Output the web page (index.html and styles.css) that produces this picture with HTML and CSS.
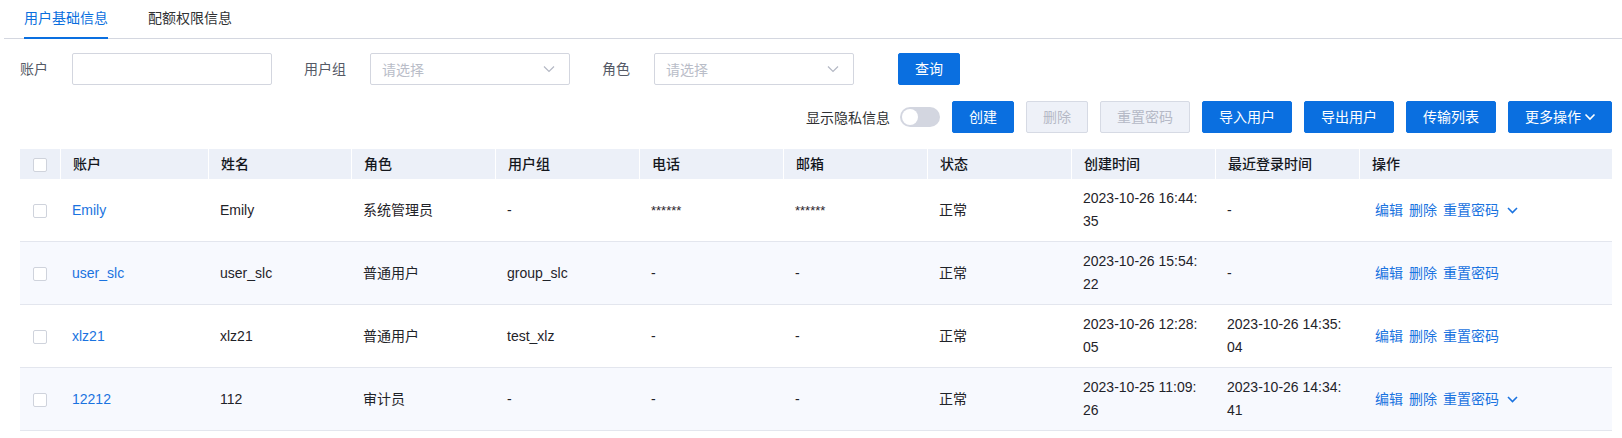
FILE: index.html
```html
<!DOCTYPE html>
<html lang="zh-CN">
<head>
<meta charset="utf-8">
<title>用户管理</title>
<link rel="stylesheet" href="styles.css">
</head>
<body>
<div class="page">
  <div class="tabs">
    <div class="tab active">用户基础信息</div>
    <div class="tab">配额权限信息</div>
  </div>
  <div class="content">
    <div class="filters">
      <div class="field">
        <span class="label">账户</span>
        <div class="input"></div>
      </div>
      <div class="field">
        <span class="label">用户组</span>
        <div class="input select"><span class="placeholder">请选择</span>
          <svg class="chev" width="12" height="8" viewBox="0 0 12 8"><path d="M1 1.5 L6 6.5 L11 1.5" fill="none" stroke="#b4b8c4" stroke-width="1.2"/></svg>
        </div>
      </div>
      <div class="field">
        <span class="label">角色</span>
        <div class="input select"><span class="placeholder">请选择</span>
          <svg class="chev" width="12" height="8" viewBox="0 0 12 8"><path d="M1 1.5 L6 6.5 L11 1.5" fill="none" stroke="#b4b8c4" stroke-width="1.2"/></svg>
        </div>
      </div>
      <button class="btn primary query">查询</button>
    </div>
    <div class="actions">
      <span class="privacy">显示隐私信息</span>
      <span class="switch"><span class="knob"></span></span>
      <button class="btn primary">创建</button>
      <button class="btn disabled">删除</button>
      <button class="btn disabled">重置密码</button>
      <button class="btn primary">导入用户</button>
      <button class="btn primary">导出用户</button>
      <button class="btn primary">传输列表</button>
      <button class="btn primary more">更多操作<svg width="12" height="8" viewBox="0 0 12 8"><path d="M1.5 1.5 L6 6 L10.5 1.5" fill="none" stroke="#fff" stroke-width="1.6"/></svg></button>
    </div>
    <table class="grid">
      <colgroup>
        <col class="c-check"><col class="c-acc"><col class="c-name"><col class="c-n"><col class="c-n"><col class="c-n"><col class="c-n"><col class="c-n"><col class="c-n"><col class="c-n"><col class="c-ops">
      </colgroup>
      <thead>
        <tr>
          <th class="chk"><span class="box"></span></th>
          <th>账户</th><th>姓名</th><th>角色</th><th>用户组</th><th>电话</th><th>邮箱</th><th>状态</th><th>创建时间</th><th>最近登录时间</th><th>操作</th>
        </tr>
      </thead>
      <tbody>
        <tr>
          <td class="chk"><span class="box"></span></td>
          <td><a class="link">Emily</a></td><td>Emily</td><td>系统管理员</td><td>-</td><td class="mask">******</td><td class="mask">******</td><td>正常</td><td>2023-10-26 16:44:35</td><td>-</td>
          <td class="ops"><a class="link">编辑</a><a class="link">删除</a><a class="link">重置密码</a><svg class="ochev" width="11" height="7" viewBox="0 0 11 7"><path d="M1 1 L5.5 5.5 L10 1" fill="none" stroke="#1a73e0" stroke-width="1.6"/></svg></td>
        </tr>
        <tr class="alt">
          <td class="chk"><span class="box"></span></td>
          <td><a class="link">user_slc</a></td><td>user_slc</td><td>普通用户</td><td>group_slc</td><td>-</td><td>-</td><td>正常</td><td>2023-10-26 15:54:22</td><td>-</td>
          <td class="ops"><a class="link">编辑</a><a class="link">删除</a><a class="link">重置密码</a></td>
        </tr>
        <tr>
          <td class="chk"><span class="box"></span></td>
          <td><a class="link">xlz21</a></td><td>xlz21</td><td>普通用户</td><td>test_xlz</td><td>-</td><td>-</td><td>正常</td><td>2023-10-26 12:28:05</td><td>2023-10-26 14:35:04</td>
          <td class="ops"><a class="link">编辑</a><a class="link">删除</a><a class="link">重置密码</a></td>
        </tr>
        <tr class="alt">
          <td class="chk"><span class="box"></span></td>
          <td><a class="link">12212</a></td><td>112</td><td>审计员</td><td>-</td><td>-</td><td>-</td><td>正常</td><td>2023-10-25 11:09:26</td><td>2023-10-26 14:34:41</td>
          <td class="ops"><a class="link">编辑</a><a class="link">删除</a><a class="link">重置密码</a><svg class="ochev" width="11" height="7" viewBox="0 0 11 7"><path d="M1 1 L5.5 5.5 L10 1" fill="none" stroke="#1a73e0" stroke-width="1.6"/></svg></td>
        </tr>
      </tbody>
    </table>
  </div>
</div>
</body>
</html>
```
FILE: styles.css
```css
* { box-sizing: border-box; }
html, body { margin: 0; padding: 0; background: #fff; }
body {
  font-family: "Liberation Sans", Arial, "Noto Sans CJK SC", sans-serif;
  font-size: 14px;
  color: #1f2329;
}
.page { padding-left: 4px; }

.tabs {
  display: flex;
  height: 39px;
  padding-left: 20px;
  border-bottom: 1px solid #d4d7e0;
  gap: 40px;
}
.tab {
  position: relative;
  line-height: 37px;
  color: #303133;
}
.tab.active { color: #0b6fde; }
.tab.active::after {
  content: "";
  position: absolute;
  left: 0; right: 0; bottom: -1px;
  height: 2px;
  background: #0a6fe0;
}

.content { padding: 14px 10px 0 16px; }

.filters {
  display: flex;
  align-items: center;
  height: 32px;
}
.field { display: flex; align-items: center; margin-right: 32px; }
.label { color: #555a66; margin-right: 24px; line-height: 20px; }
.input {
  width: 200px;
  height: 32px;
  border: 1px solid #d3d6df;
  border-radius: 2px;
  background: #fff;
}
.select {
  display: flex;
  align-items: center;
  justify-content: space-between;
  padding: 0 14px 0 11px;
}
.placeholder { color: #b9bdc8; }
.chev { display: block; }
.query { margin-left: 12px; width: 62px; padding: 0; }

.btn {
  height: 32px;
  padding: 0 16px;
  border: 1px solid #0a6fe0;
  border-radius: 2px;
  font: inherit;
  font-size: 14px;
  line-height: 30px;
  background: #0a6fe0;
  color: #fff;
  cursor: pointer;
  white-space: nowrap;
}
.btn.disabled {
  background: #eef1f8;
  border-color: #d6dae4;
  color: #b5b9c6;
}
.btn.more { display: inline-flex; align-items: center; gap: 3px; padding: 0 14px 0 16px; width: 104px; }

.actions {
  display: flex;
  justify-content: flex-end;
  align-items: center;
  gap: 12px;
  margin-top: 16px;
}
.privacy { color: #303133; margin-right: -2px; }
.switch {
  position: relative;
  display: inline-block;
  width: 40px;
  height: 20px;
  border-radius: 10px;
  background: #d3d6e0;
}
.knob {
  position: absolute;
  left: 2px; top: 2px;
  width: 16px; height: 16px;
  border-radius: 50%;
  background: #fff;
}

.grid {
  margin-top: 16px;
  width: 1592px;
  table-layout: fixed;
  border-collapse: separate;
  border-spacing: 0;
}
.c-check { width: 40px; }
.c-acc { width: 148px; }
.c-name { width: 143px; }
.c-n { width: 144px; }
.c-ops { width: 253px; }

th {
  height: 30px;
  padding: 0 12px;
  background: #ecf0f8;
  text-align: left;
  font-weight: 500;
  color: #14171d;
  line-height: 20px;
  border-left: 1px solid #fff;
}
th:first-child { border-left: none; }
td {
  padding: 8px 12px;
  line-height: 23px;
  height: 63px;
  border-bottom: 1px solid #e3e6ee;
  word-break: break-all;
  vertical-align: middle;
  color: #1f2329;
}
tr.alt td { background: #f7f9fe; }
.chk { padding: 0; text-align: center; }
.box {
  display: inline-block;
  width: 14px;
  height: 14px;
  border: 1px solid #cfd3dc;
  border-radius: 2px;
  background: #fff;
  vertical-align: middle;
}
.link { color: #1a73e0; text-decoration: none; cursor: pointer; }
.mask { font-size: 13px; }
.ops .link { margin-right: 6px; }
.ops { padding-left: 16px; }
.ochev { vertical-align: middle; margin-left: 2px; }
```
